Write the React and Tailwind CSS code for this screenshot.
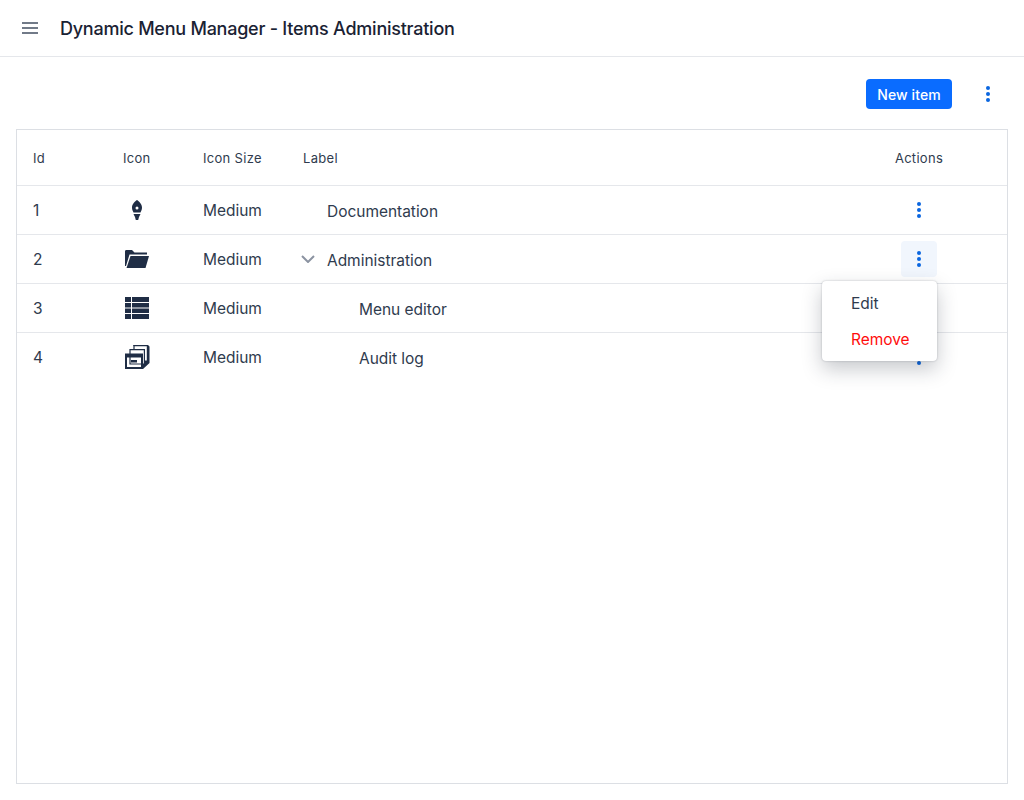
const rows = [
  { id: 1, icon: "rocket", label: "Documentation", indent: "pl-10" },
  { id: 2, icon: "folder", label: "Administration", indent: "pl-10", open: true },
  { id: 3, icon: "table", label: "Menu editor", indent: "pl-[72px]" },
  { id: 4, icon: "archive", label: "Audit log", indent: "pl-[72px]" },
];

function DotsIcon() {
  return (
    <svg width="4" height="16" viewBox="0 0 4 16" className="fill-[#0a66e0]">
      <circle cx="2" cy="2" r="2" />
      <circle cx="2" cy="8" r="2" />
      <circle cx="2" cy="14" r="2" />
    </svg>
  );
}

function RowIcon({ name }) {
  if (name === "rocket") {
    return (
      <svg width="26" height="24" viewBox="0 0 26 24" className="fill-[#1f2d45]">
        <path
          fillRule="evenodd"
          d="M13 2 C15 3.5 18 6 18 9.5 C18 11.5 17.2 13 16.5 14.5 L9.5 14.5 C8.8 13 8 11.5 8 9.5 C8 6 11 3.5 13 2 Z M13 8.5 A1.5 1.5 0 1 0 13 11.5 A1.5 1.5 0 1 0 13 8.5 Z"
        />
        <path d="M9.5 16 L16.5 16 L15 19 L14.2 22 L11.8 22 L11 19 Z" />
      </svg>
    );
  }
  if (name === "folder") {
    return (
      <svg width="26" height="20" viewBox="0 0 26 20" className="fill-[#1f2d45]">
        <path d="M1 2.5 C1 1.5 1.5 1 2.5 1 L8 1 L10.5 3.5 L23 3.5 L23 5.5 L5.5 5.5 L2 17 L1 17 Z" />
        <path d="M6.5 7 L25 7 L21.5 19 L2.5 19 Z" />
      </svg>
    );
  }
  if (name === "table") {
    return (
      <svg width="26" height="24" viewBox="0 0 26 24" className="fill-[#1f2d45]">
        <rect x="1" y="1" width="6" height="5" />
        <rect x="8" y="1" width="17" height="5" />
        <rect x="1" y="7" width="6" height="4.5" />
        <rect x="8" y="7" width="17" height="4.5" />
        <rect x="1" y="12.5" width="6" height="4.5" />
        <rect x="8" y="12.5" width="17" height="4.5" />
        <rect x="1" y="18" width="6" height="5" />
        <rect x="8" y="18" width="17" height="5" />
      </svg>
    );
  }
  return (
    <svg width="26" height="26" viewBox="0 0 26 26" className="fill-[#1f2d45]">
      <path d="M9 1 L24 1 L25.5 2.5 L25.5 19 L19 25 L19 14 Z" />
      <path fill="#ffffff" stroke="#1f2d45" strokeWidth="1.2" d="M10 1.6 L23.4 1.6 L23.4 17 L10 17 Z" />
      <path fill="#ffffff" stroke="#1f2d45" strokeWidth="1.2" d="M6 5.6 L20.4 5.6 L20.4 20 L6 20 Z" />
      <path
        fillRule="evenodd"
        d="M1 9.5 L19 9.5 L19 25 L1 25 Z M3 13.5 L3 23 L17 23 L17 13.5 Z"
      />
      <rect x="7" y="16" width="6" height="2.5" />
    </svg>
  );
}

export default function App() {
  return (
    <div className="h-[800px] bg-white text-[#1f2937] font-['Inter',sans-serif] flex flex-col">
      <header className="h-[57px] shrink-0 border-b border-[#e5e7eb] flex items-center pl-[22px]">
        <svg width="16" height="12" viewBox="0 0 16 12" className="stroke-[#717a88]" strokeWidth="2">
          <path d="M0 1 H16 M0 6 H16 M0 11 H16" />
        </svg>
        <h1 className="ml-[22px] pt-px text-lg leading-7 font-medium tracking-[-0.24px] text-[#1a2233]">
          Dynamic Menu Manager - Items Administration
        </h1>
      </header>

      <div className="h-[72px] shrink-0 flex items-start justify-end pt-[22px] pr-[34px]">
        <button className="h-[30px] w-[86px] pt-px rounded bg-[#0a6cff] text-white text-sm font-medium tracking-[0.1px]">
          New item
        </button>
        <div className="ml-[34px] h-[30px] flex items-center">
          <DotsIcon />
        </div>
      </div>

      <div className="h-[655px] mx-4 border border-[#dcdfe4] text-[#2f3b4e]">
        <div className="h-14 pt-[2px] grid grid-cols-[90px_80px_100px_1fr_176px] items-center border-b border-[#e5e7eb] text-[13px] tracking-[0.3px]">
          <div className="pl-4">Id</div>
          <div className="pl-4">Icon</div>
          <div className="pl-4">Icon Size</div>
          <div className="pl-4">Label</div>
          <div className="text-center">Actions</div>
        </div>

        {rows.map((row) => (
          <div
            key={row.id}
            className="h-[49px] grid grid-cols-[90px_80px_100px_1fr_176px] items-center border-b border-[#e5e7eb] last:border-transparent text-[15.5px] tracking-[-0.03px]"
          >
            <div className="pl-4 pt-0.5">{row.id}</div>
            <div className="pl-[17px] flex items-center">
              <RowIcon name={row.icon} />
            </div>
            <div className="pl-4 pt-0.5">Medium</div>
            <div className={`relative pt-1 ${row.indent}`}>
              {row.open && (
                <svg
                  width="14"
                  height="8"
                  viewBox="0 0 14 8"
                  fill="none"
                  className="absolute left-[14px] top-[10px] stroke-[#8b93a1]"
                  strokeWidth="2"
                >
                  <path d="M1 1 L7 7 L13 1" />
                </svg>
              )}
              {row.label}
            </div>
            <div className="relative flex justify-center">
              {row.open ? (
                <>
                  <button className="w-9 h-9 rounded bg-[#f1f6fd] flex items-center justify-center">
                    <DotsIcon />
                  </button>
                  <div className="absolute z-10 top-[40px] left-[-9px] w-[115px] h-20 py-1 rounded bg-white shadow-[0_8px_20px_rgba(31,41,55,0.25),0_0_2px_rgba(31,41,55,0.3)]">
                    <div className="h-9 pl-[29px] pt-0.5 flex items-center">Edit</div>
                    <div className="h-9 pl-[29px] pt-0.5 flex items-center text-[#ff0d0d]">Remove</div>
                  </div>
                </>
              ) : (
                <DotsIcon />
              )}
            </div>
          </div>
        ))}
      </div>
    </div>
  );
}
